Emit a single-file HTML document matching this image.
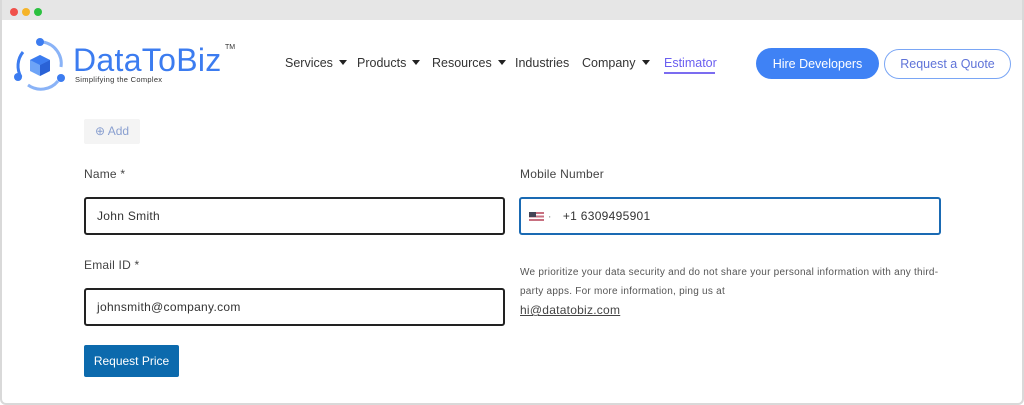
<!DOCTYPE html><html><head><style>
*{margin:0;padding:0;box-sizing:border-box}
body{width:1024px;height:405px;background:#fff;font-family:"Liberation Sans",sans-serif;overflow:hidden;position:relative}
.frame{position:absolute;left:0;top:0;width:1024px;height:405px;border:2px solid #d9d9d9;border-top:none;border-radius:0 0 6px 6px;}
.bar{position:absolute;left:0;top:0;width:1024px;height:20px;background:#e6e6e6}
.dot{position:absolute;top:8px;width:8px;height:8px;border-radius:50%}
.a{position:absolute;white-space:nowrap}
.nav{top:56px;font-size:12.5px;color:#333}
.tri{display:inline-block;width:0;height:0;border-left:4px solid transparent;border-right:4px solid transparent;border-top:5px solid #222;margin-left:6px;vertical-align:2px}
.lbl{font-size:12px;color:#444;letter-spacing:0.2px}
.inp{position:absolute;border:2px solid #222;border-radius:3px;height:38px;font-size:12px;color:#333;padding:10px 0 0 11px;letter-spacing:0.3px}
</style></head><body>
<div class="bar"></div>
<div class="dot" style="left:10px;background:#f0514b"></div>
<div class="dot" style="left:22px;background:#f5b429"></div>
<div class="dot" style="left:34px;background:#2cc140"></div>
<div class="frame"></div>
<svg class="a" style="left:13px;top:37px" width="55" height="55" viewBox="0 0 55 55">
<path d="M10 15 A22 22 0 0 0 8 40" stroke="#3c7cf0" stroke-width="3" fill="none"/>
<path d="M30 5 A22 22 0 0 1 48 30" stroke="#8ab3f7" stroke-width="3" fill="none"/>
<path d="M15 48 A22 22 0 0 0 45 44" stroke="#8ab3f7" stroke-width="3" fill="none"/>
<circle cx="27" cy="5" r="4" fill="#3c7cf0"/><circle cx="5" cy="40" r="4" fill="#3c7cf0"/><circle cx="48" cy="41" r="4" fill="#3c7cf0"/>
<path d="M27 18 L37 23 L37 34 L27 39 L17 34 L17 23Z" fill="#6ea4f7"/><path d="M27 18 L37 23 L27 28 L17 23Z" fill="#3c7cf0"/><path d="M27 28 L37 23 L37 34 L27 39Z" fill="#2a62d6"/>
</svg>
<div class="a" style="left:73px;top:42px;font-size:32px;color:#3c7cf0;letter-spacing:0.3px">DataToBiz</div>
<div class="a" style="left:225px;top:44px;font-size:7px;color:#333">TM</div>
<div class="a" style="left:75px;top:75px;font-size:7.5px;color:#333;letter-spacing:0.3px">Simplifying the Complex</div>
<div class="a nav" style="left:285px">Services<span class="tri"></span></div>
<div class="a nav" style="left:357px">Products<span class="tri"></span></div>
<div class="a nav" style="left:432px">Resources<span class="tri"></span></div>
<div class="a nav" style="left:515px">Industries</div>
<div class="a nav" style="left:582px">Company<span class="tri"></span></div>
<div class="a nav" style="left:664px;color:#6a5ef0">Estimator</div>
<div class="a" style="left:664px;top:72px;width:51px;height:2px;background:#7b6cf0"></div>
<div class="a" style="left:756px;top:48px;width:123px;height:31px;border-radius:16px;background:#3f82f5;color:#fff;font-size:12.5px;display:flex;align-items:center;justify-content:center">Hire Developers</div>
<div class="a" style="left:884px;top:49px;width:127px;height:30px;border-radius:15px;border:1px solid #7aa6f5;color:#5f73d8;font-size:12.5px;display:flex;align-items:center;justify-content:center">Request a Quote</div>
<div class="a" style="left:84px;top:119px;width:56px;height:25px;background:#f4f4f4;border-radius:2px;color:#8aa0d0;font-size:12px;line-height:25px;padding-left:11px">⊕ Add</div>
<div class="a lbl" style="left:84px;top:167px">Name *</div>
<div class="a lbl" style="left:520px;top:167px">Mobile Number</div>
<div class="inp" style="left:84px;top:197px;width:421px">John Smith</div>
<div class="inp" style="left:519px;top:197px;width:422px;border-color:#1a6ab3;padding-left:8px">
<span style="display:inline-block;width:15px;height:9px;background:linear-gradient(#c87080 0 20%,#fff 20% 40%,#c87080 40% 60%,#fff 60% 80%,#c87080 80%);position:relative;vertical-align:-1px"><span style="position:absolute;left:0;top:0;width:7px;height:5px;background:#445"></span></span> <span style="color:#999">·</span>&nbsp;&nbsp; +1 6309495901</div>
<div class="a lbl" style="left:84px;top:258px">Email ID *</div>
<div class="inp" style="left:84px;top:288px;width:421px">johnsmith@company.com</div>
<div class="a" style="left:520px;top:263px;font-size:10px;color:#555;line-height:19px;white-space:normal;width:425px;letter-spacing:0.25px">We prioritize your data security and do not share your personal information with any third-<br>party apps. For more information, ping us at<br><span style="text-decoration:underline;font-size:12px;color:#444">hi@datatobiz.com</span></div>
<div class="a" style="left:84px;top:345px;width:95px;height:32px;background:#0c6aad;border-radius:2px;color:#fff;font-size:12px;display:flex;align-items:center;justify-content:center">Request Price</div>
</body></html>
